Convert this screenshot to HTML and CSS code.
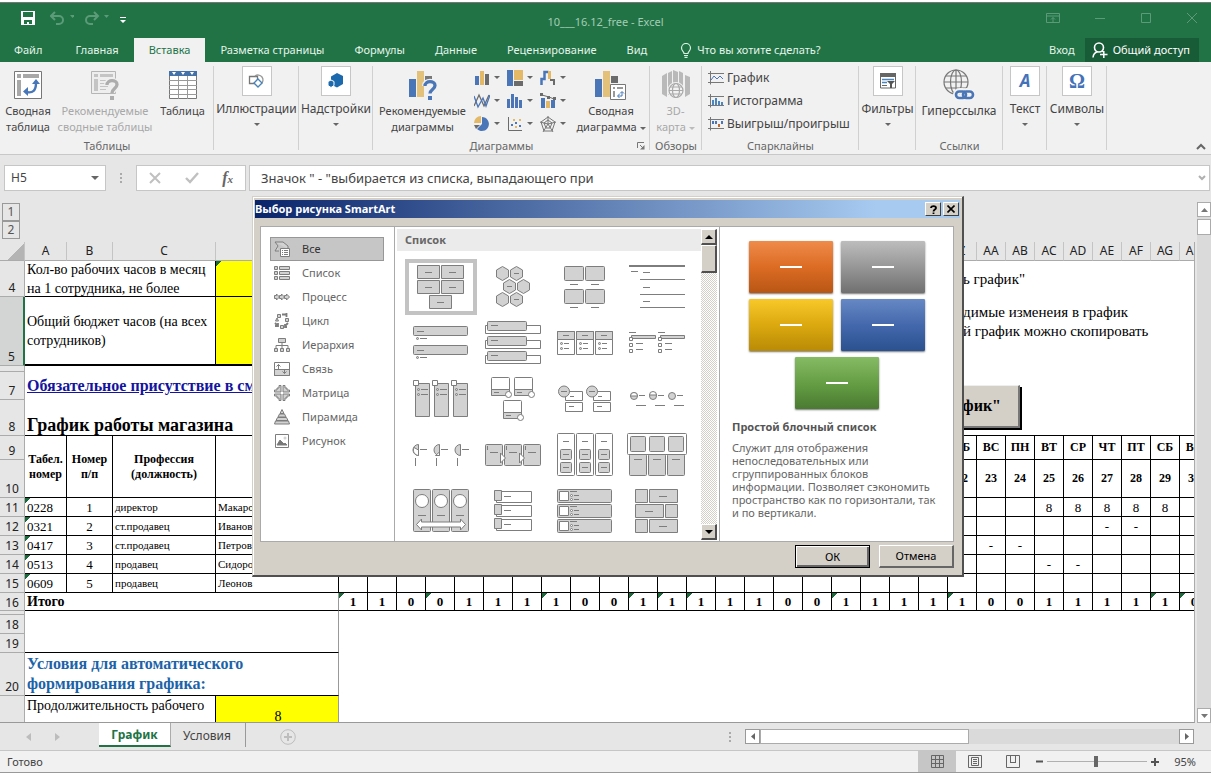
FILE: index.html
```html
<!DOCTYPE html>
<html lang="ru">
<head>
<meta charset="utf-8">
<title>10___16.12_free - Excel</title>
<link rel="stylesheet" href="styles.css">
</head>
<body>
<div class="app">
  <header class="titlebar">
    <div class="quick">
      <button class="icon-btn" aria-label="Сохранить"><svg width="14" height="14" viewBox="0 0 14 14"><path fill="#fff" fill-rule="evenodd" d="M0 0h14v14H0zM2 1v5h10V1zM3 9v4h3v-2h2v2h3V9z"/></svg></button>
      <button class="icon-btn" aria-label="Отменить"><svg width="24" height="14" viewBox="0 0 24 14"><path d="M5 1L1 5l4 4M1 5h8a4 4 0 0 1 0 8H6" fill="none" stroke="#5c9b78" stroke-width="2"/><path d="M20 4h5l-2.500 3z" fill="#5c9b78"/></svg></button>
      <button class="icon-btn" aria-label="Вернуть"><svg width="24" height="14" viewBox="0 0 24 14"><path d="M9 1l4 4-4 4M13 5H5a4 4 0 0 0 0 8h3" fill="none" stroke="#5c9b78" stroke-width="2"/><path d="M19 4h5l-2.500 3z" fill="#5c9b78"/></svg></button>
      <button class="icon-btn" aria-label="Настройка панели"><svg width="6" height="14" viewBox="0 0 6 14"><path d="M0 6h6v1H0zM0 9h6l-3 3z" fill="#fff"/></svg></button>
    </div>
    <div class="doc-title">10___16.12_free - Excel</div>
    <div class="window-buttons">
      <button class="icon-btn" aria-label="Параметры ленты"><svg width="14" height="12" viewBox="0 0 14 12"><path d="M.5 1.500h13v9H.5zM.5 4h13M7 10V5.500M5 7.500l2-2 2 2" fill="none" stroke="#5c9b78"/></svg></button>
      <button class="icon-btn" aria-label="Свернуть"><svg width="12" height="12" viewBox="0 0 12 12"><path d="M1 6.500h10" stroke="#5c9b78"/></svg></button>
      <button class="icon-btn" aria-label="Развернуть"><svg width="12" height="12" viewBox="0 0 12 12"><path d="M1.500 1.500h9v9h-9z" fill="none" stroke="#5c9b78"/></svg></button>
      <button class="icon-btn" aria-label="Закрыть"><svg width="12" height="12" viewBox="0 0 12 12"><path d="M1 1l10 10M11 1L1 11" stroke="#5c9b78"/></svg></button>
    </div>
  </header>

  <nav class="tabs">
    <button class="tab file">Файл</button>
    <button class="tab">Главная</button>
    <button class="tab active">Вставка</button>
    <button class="tab">Разметка страницы</button>
    <button class="tab">Формулы</button>
    <button class="tab">Данные</button>
    <button class="tab">Рецензирование</button>
    <button class="tab">Вид</button>
    <button class="tab tell"><svg width="12" height="15" viewBox="0 0 12 15"><path d="M4 10.500C4 8.500 1.500 8 1.500 5a4.500 4.500 0 0 1 9 0c0 3-2.500 3.500-2.500 5.500zM4 12.500h4M4.500 14.300h3" fill="none" stroke="#d6f2e0" stroke-width="1.200"/></svg>Что вы хотите сделать?</button>
    <span class="spacer"></span>
    <button class="tab signin">Вход</button>
    <button class="share"><svg width="16" height="16" viewBox="0 0 16 16"><circle cx="7" cy="5.500" r="4.500" fill="none" stroke="#fff" stroke-width="1.600"/><path d="M1 15.500c.3-3 2-5 4.500-5.700M10 9l1.500 1M8 12.500h7.500M11.800 9v7" fill="none" stroke="#fff" stroke-width="1.500"/></svg>Общий доступ</button>
  </nav>

  <section class="ribbon">
    <div class="group g-tables">
      <div class="tools">
        <button class="big w-pivot"><svg width="28" height="28" viewBox="0 0 28 28"><path d="M.5.500h27v27H.5z" fill="#fff" stroke="#777"/><path d="M3 3h4v4H3zM9 3h16v4H9zM3 9h4v16H3z" fill="#a8a8a8"/><path d="M12 21c7 1.500 10-1.500 10-9" fill="none" stroke="#4777b8" stroke-width="2.400"/><path d="M18 13l4-5 4 5zM14 16l-5 4.500 5 4.500z" fill="#4777b8"/></svg><span>Сводная<br>таблица</span></button>
        <button class="big w-rec off"><svg width="28" height="30" viewBox="0 0 28 30"><path d="M.5 1.500h24v22H.5z" fill="#eee" stroke="#b5b5b5"/><path d="M3 4h4v3H3zM9 4h13v3H9zM3 9h4v12H3z" fill="#c4c4c4"/><path d="M9 10.500h12M9 13.500h8M9 16.500h8M9 19.500h6" stroke="#c4c4c4"/><path d="M16 15c0-6 10-5.500 10-.5 0 4-5 4-5 8.500" fill="none" stroke="#f0f0f0" stroke-width="6"/><path d="M16 15c0-6 10-5.500 10-.5 0 4-5 4-5 8.500" fill="none" stroke="#adadad" stroke-width="3.300"/><path d="M19 26h4v4h-4z" fill="#adadad"/></svg><span>Рекомендуемые<br>сводные таблицы</span></button>
        <button class="big w-table"><svg width="28" height="28" viewBox="0 0 28 28"><path d="M.5.500h27v27H.5z" fill="#fff" stroke="#777"/><path d="M0 0h28v5H0z" fill="#4472a8"/><path d="M3 1h4L5 4zM12 1h4l-2 3zM21 1h4l-2 3z" fill="#fff"/><path d="M9.500 5v23M18.500 5v23M0 9.500h28M0 14.500h28M0 18.500h28M0 23.500h28" stroke="#999"/></svg><span>Таблица</span></button>
      </div>
      <div class="group-name">Таблицы</div>
    </div>
    <div class="group g-illus"><button class="boxed"><i><svg width="18" height="18" viewBox="0 0 18 18"><path d="M1.500 4.500h8v7h-8z" fill="#fff" stroke="#777" stroke-width="1.300"/><path d="M7 4a5 5 0 1 1 6 8" fill="none" stroke="#999" stroke-width="1.300"/><path d="M10 7l4 4-4 4-4-4z" fill="#fff" stroke="#4782b8" stroke-width="1.300"/></svg></i><span>Иллюстрации</span><b class="caret"></b></button></div>
    <div class="group g-addins"><button class="boxed"><i><svg width="18" height="18" viewBox="0 0 18 18"><path d="M4 4.500L10 1l6 3v8l-6 3.500-6-3z" fill="#1d69ae"/><path d="M1 9.500L4 8l3 1.500v4L4 15.500l-3-2z" fill="#1d69ae" stroke="#fff"/></svg></i><span>Надстройки</span><b class="caret"></b></button></div>
    <div class="group g-charts">
      <div class="tools">
        <button class="big w-recch"><svg width="28" height="30" viewBox="0 0 28 30"><path d="M0 9h7v18H0z" fill="#4a76b8"/><path d="M8 1h7v26H8z" fill="#e3c17b"/><path d="M16 6h7v4h-7z" fill="#777"/><path d="M16 16c0-6 10-5.500 10-.5 0 4-5 4-5 8" fill="none" stroke="#f0f0f0" stroke-width="6"/><path d="M16 16c0-6 10-5.500 10-.5 0 4-5 4-5 8" fill="none" stroke="#4a76b8" stroke-width="3.300"/><path d="M19 26h4v4h-4z" fill="#4a76b8"/></svg><span>Рекомендуемые<br>диаграммы</span></button>
        <div class="chart-grid">
          <button aria-label="Гистограмма"><svg width="16" height="16"><path d="M1 6h4v9H1z" fill="#4a76b8"/><path d="M6 1h4v14H6z" fill="#e3b867"/><path d="M11 4h4v11h-4z" fill="#6b6b6b"/></svg><b class="caret"></b></button>
          <button aria-label="Иерархическая"><svg width="16" height="16"><path d="M0 0h6v16H0z" fill="#4a76b8"/><path d="M7 0h9v10H7z" fill="#e3b867"/><path d="M7 11h9v5H7z" fill="#6b6b6b"/></svg><b class="caret"></b></button>
          <button aria-label="Каскадная"><svg width="16" height="16"><path d="M1.500 15V9h3V2h4" fill="none" stroke="#4a76b8" stroke-width="2.500"/><path d="M8 1h3v8H8z" fill="#e3b867"/><path d="M10 10h4v5" fill="none" stroke="#6b6b6b" stroke-width="2"/></svg><b class="caret"></b></button>
          <button aria-label="График"><svg width="16" height="16"><path d="M0 13L5 2l5 11 5-11" fill="none" stroke="#6b6b6b" stroke-width="1.300"/><path d="M0 3l4 11 5-9 3 8 4-11" fill="none" stroke="#4a76b8" stroke-width="1.300"/></svg><b class="caret"></b></button>
          <button aria-label="Статистическая"><svg width="16" height="16"><path d="M0 6h3v9H0zM4 1h3v14H4zM8 4h3v11H8zM12 7h3v8h-3z" fill="#4a76b8"/></svg><b class="caret"></b></button>
          <button aria-label="Комбинированная"><svg width="16" height="16"><path d="M1 5h4v10H1z" fill="#4a76b8"/><path d="M6 8h4v7H6z" fill="#e3b867"/><path d="M11 7h4v8h-4z" fill="#4a76b8"/><path d="M2 2l7 2 5 2" fill="none" stroke="#6b6b6b"/><path d="M0 0h3v3H0zM7 3h3v3H7zM13 4h3v3h-3z" fill="#6b6b6b"/></svg><b class="caret"></b></button>
          <button aria-label="Круговая"><svg width="16" height="16"><path d="M8 1a7 7 0 1 1-5 12l5-5z" fill="#4a76b8"/><path d="M7 0v7H0a7 7 0 0 1 7-7z" fill="#e3b867"/><path d="M0 9h6l-4 4z" fill="#6b6b6b"/></svg><b class="caret"></b></button>
          <button aria-label="Точечная"><svg width="16" height="16"><path d="M1.500 1v13.500H15" fill="none" stroke="#6b6b6b"/><path d="M4 8h2v2H4zM8 6h2v2H8zM12 9h2v2h-2z" fill="#4a76b8"/><path d="M6 3h2v2H6zM12 3h2v2h-2zM8 10h2v2H8z" fill="#e3b867"/></svg><b class="caret"></b></button>
          <button aria-label="Лепестковая"><svg width="16" height="16"><path d="M8 1l7 5-3 9H4L1 6zM8 4l4 3-2 5H6L4 7zM8 0v8M16 6L8 8l5 8M8 8L3 16M8 8L0 6" fill="none" stroke="#777"/></svg><b class="caret"></b></button>
        </div>
        <button class="big w-pvch"><svg width="32" height="30" viewBox="0 0 32 30"><path d="M0 9h7v18H0z" fill="#4a76b8"/><path d="M8 1h7v26H8z" fill="#e3c17b"/><path d="M16 6h7v7h-7z" fill="#6b6b6b"/><path d="M15.500 14.500h15v15h-15z" fill="#fff" stroke="#777"/><path d="M18 17h2v2h-2zM22 17h6v2h-6zM18 21h2v6h-2z" fill="#999"/><path d="M23 26h4v-4M24.500 24l-2 2 2 2M25 23.500l2-2 2 2" fill="none" stroke="#4777b8"/></svg><span>Сводная<br>диаграмма <b class="caret"></b></span></button>
      </div>
      <div class="group-name">Диаграммы</div>
      <button class="launcher" aria-label="Параметры диаграмм"><svg width="8" height="8" viewBox="0 0 8 8"><path d="M.5 6V.500H7M3 3l3 3" fill="none" stroke="#777"/><path d="M7.500 3v4.500H3z" fill="#777"/></svg></button>
    </div>
    <div class="group g-map">
      <div class="tools">
        <button class="big off w-map"><svg width="30" height="30" viewBox="0 0 30 30"><path d="M1 6l5-3v24l-5-3zM7 3l4-2v24H7zM12 0l5 2v20h-5zM18 1l4 2v22h-4zM24 5l5 2v17l-5 3z" fill="#b9b9b9"/><circle cx="15" cy="20.500" r="7.500" fill="#f2f2f2" stroke="#f2f2f2" stroke-width="2"/><g fill="none" stroke="#a9a9a9" stroke-width="1.200"><circle cx="15" cy="20.500" r="7"/><ellipse cx="15" cy="20.500" rx="3.500" ry="7"/><path d="M8 20.500h14M9 17h12M9 24h12"/></g></svg><span>3D-<br>карта <b class="caret"></b></span></button>
      </div>
      <div class="group-name">Обзоры</div>
    </div>
    <div class="group g-spark">
      <div class="spark-list">
        <button><svg width="16" height="14"><path d="M2.500 0v13.500M0 2.500h16M0 11.500h16" stroke="#777" fill="none"/><path d="M3 9l3-4 3 3 3-3 3 3" fill="none" stroke="#4a76b8"/></svg>График</button>
        <button><svg width="16" height="14"><path d="M2.500 0v13.500M0 2.500h16M0 11.500h16" stroke="#777" fill="none"/><path d="M4 6h2v5H4zM7 4h2v7H7zM10 7h2v4h-2zM13 8h2v3h-2z" fill="#4a86c0"/></svg>Гистограмма</button>
        <button><svg width="16" height="14"><path d="M2.500 0v13.500M0 2.500h16M0 11.500h16" stroke="#777" fill="none"/><path d="M4 4h2v3H4zM7 4h2v3H7zM13 4h2v3h-2z" fill="#4a76b8"/><path d="M10 7h2v3h-2z" fill="#c0692c"/></svg>Выигрыш/проигрыш</button>
      </div>
      <div class="group-name">Спарклайны</div>
    </div>
    <div class="group g-filters"><button class="boxed"><i><svg width="16" height="16" viewBox="0 0 16 16"><path d="M.5 1h15v14H.5z" fill="#fff" stroke="#666"/><path d="M0 0h16v4H0z" fill="#666"/><path d="M2 6.500h12M2 9.500h5" stroke="#4a86c0" stroke-width="1.500"/><path d="M2 12.500h5" stroke="#666"/><path d="M7 8h8l-3 3v4h-2v-4z" fill="#555"/></svg></i><span>Фильтры</span><b class="caret"></b></button></div>
    <div class="group g-links">
      <div class="tools">
        <button class="big w-link"><svg width="32" height="32" viewBox="0 0 32 32"><g fill="none" stroke="#777" stroke-width="1.200"><circle cx="13" cy="13" r="12"/><ellipse cx="13" cy="13" rx="5.500" ry="12"/><path d="M13 1v24M1 13h24M3 7h20M3 19h20"/></g><g fill="none" stroke="#f2f2f2" stroke-width="6"><rect x="13" y="22" width="10" height="7" rx="3.500"/><rect x="20" y="22" width="10" height="7" rx="3.500"/></g><g fill="none" stroke="#4a76b8" stroke-width="2.600"><rect x="13" y="22.500" width="10" height="6.500" rx="3.200"/><rect x="20" y="22.500" width="10" height="6.500" rx="3.200"/></g></svg><span>Гиперссылка</span></button>
      </div>
      <div class="group-name">Ссылки</div>
    </div>
    <div class="group g-text"><button class="boxed"><i class="letter slanted">A</i><span>Текст</span><b class="caret"></b></button></div>
    <div class="group g-symbols"><button class="boxed"><i class="letter omega">Ω</i><span>Символы</span><b class="caret"></b></button></div>
    <span class="spacer"></span>
    <button class="collapse" aria-label="Свернуть ленту"><svg width="10" height="7" viewBox="0 0 10 7"><path d="M1 6l4-4 4 4" fill="none" stroke="#666" stroke-width="2"/></svg></button>
  </section>

  <section class="formula-row">
    <label class="name-box"><input class="name-input" aria-label="Поле имени" value="H5"><b class="caret large"></b></label>
    <span class="grip"></span>
    <div class="fx-box">
      <button aria-label="Отмена ввода"><svg width="12" height="12"><path d="M1 1l10 10M11 1L1 11" stroke="#c0c0c0" stroke-width="2"/></svg></button>
      <button aria-label="Ввод"><svg width="14" height="12"><path d="M1 6l4 4 8-9" fill="none" stroke="#c0c0c0" stroke-width="2.400"/></svg></button>
      <button class="fx" aria-label="Вставить функцию">f<sub>x</sub></button>
    </div>
    <label class="formula-box"><input aria-label="Строка формул" value='Значок " - "выбирается из списка, выпадающего при'><svg width="8" height="6" viewBox="0 0 8 6"><path d="M1 1l3 3 3-3" fill="none" stroke="#b0b0b0" stroke-width="2"/></svg></label>
  </section>

  <main class="workspace">
    <div class="sheet-col">
      <div class="levels"><button>1</button><button>2</button></div>
      <div class="sheet">
        <table class="grid">
          <colgroup id="cols"><col class="c-head"><col class="c-a"><col class="c-b"><col class="c-c"><col class="c-d"></colgroup>
          <thead><tr id="letters"><th class="corner"></th><th>A</th><th>B</th><th>C</th><th></th></tr></thead>
          <tbody>
            <tr class="r4"><th>4</th><td colspan="3" class="line"><div class="two-lines">Кол-во рабочих часов в месяц<br>на 1 сотрудника, не более</div></td><td class="yellow flag line"></td><td colspan="30" class="note">ь график"</td></tr>
            <tr class="r5"><th class="current">5</th><td colspan="3" class="line thick">Общий бюджет часов (на всех<br>сотрудников)</td><td class="yellow line thick"></td><td colspan="30" class="note top">димые изменеия в график<br>й график можно скопировать</td></tr>
            <tr class="r6"><th></th><td colspan="34"></td></tr>
            <tr class="r7"><th>7</th><td colspan="34"><a href="#shift">Обязательное присутствие в см</a></td></tr>
            <tr class="r8"><th>8</th><td colspan="34" class="heading under">График работы магазина</td></tr>
            <tr class="r9 days" id="weekdays"><th>9</th><td rowspan="2">Табел.<br>номер</td><td rowspan="2">Номер<br>п/п</td><td rowspan="2">Профессия<br>(должность)</td><td rowspan="2"></td></tr>
            <tr class="r10 days" id="dates"><th>10</th></tr>
          </tbody>
          <tbody id="staff"></tbody>
          <tbody>
            <tr class="r16" id="totals"><th>16</th><td colspan="4" class="edge under">Итого</td></tr>
            <tr class="r17"><th></th><td colspan="4" class="edge"></td></tr>
            <tr class="r18"><th>18</th><td colspan="4" class="edge"></td></tr>
            <tr class="r18"><th>19</th><td colspan="4" class="edge under"></td></tr>
            <tr class="r20"><th>20</th><td colspan="4" class="edge under blue">Условия для автоматического<br>формирования графика:</td></tr>
            <tr class="r21"><th></th><td colspan="3" class="line">Продолжительность рабочего</td><td class="yellow edge eight">8</td></tr>
          </tbody>
        </table>
        <button class="macro">фик"</button>
      </div>
    </div>
    <div class="vscroll">
      <button aria-label="Вверх"><svg width="7" height="4"><path d="M0 4h7L3.500 0z" fill="#777"/></svg></button>
      <span class="thumb-v"></span>
      <span class="spacer"></span>
      <button aria-label="Вниз"><svg width="7" height="4"><path d="M0 0h7L3.500 4z" fill="#777"/></svg></button>
    </div>
  </main>

  <section class="sheet-tabs">
    <div class="tab-nav">
      <button aria-label="Назад"><svg width="5" height="8"><path d="M5 0v8L0 4z" fill="#bcbcbc"/></svg></button>
      <button aria-label="Вперёд"><svg width="5" height="8"><path d="M0 0v8l5-4z" fill="#bcbcbc"/></svg></button>
    </div>
    <button class="sheet-tab current">График</button>
    <button class="sheet-tab">Условия</button>
    <button class="add" aria-label="Новый лист"><svg width="16" height="16" viewBox="0 0 16 16"><circle cx="8" cy="8" r="7.300" fill="none" stroke="#bdbdbd"/><path d="M8 4v8M4 8h8" stroke="#bdbdbd" stroke-width="2"/></svg></button>
    <span class="spacer"></span>
    <span class="grip"></span>
    <div class="hscroll">
      <button aria-label="Влево"><svg width="4" height="7"><path d="M4 0v7L0 3.500z" fill="#666"/></svg></button>
      <span class="thumb-h"></span>
      <span class="spacer"></span>
      <button aria-label="Вправо"><svg width="4" height="7"><path d="M0 0v7l4-3.500z" fill="#666"/></svg></button>
    </div>
  </section>

  <footer class="status">
    <span>Готово</span>
    <span class="spacer"></span>
    <button class="view on" aria-label="Обычный"><svg width="13" height="13" viewBox="0 0 13 13"><path d="M.5.500h12v12H.5zM4.500 0v13M8.500 0v13M0 4.500h13M0 8.500h13" fill="none" stroke="#666"/></svg></button>
    <button class="view" aria-label="Разметка страницы"><svg width="14" height="13" viewBox="0 0 14 13"><path d="M.5.500h13v12H.5zM3.500 2.500h7v8h-7zM5 4.500h4M5 6.500h4M5 8.500h4" fill="none" stroke="#666"/></svg></button>
    <button class="view" aria-label="Страничный режим"><svg width="14" height="13" viewBox="0 0 14 13"><path d="M.5.500h13v12H.5zM4.500 0v7.500M9.500 0v7.500M4 7.500h6" fill="none" stroke="#666"/></svg></button>
    <button class="zoom-btn" aria-label="Мельче"><svg width="7" height="7"><path d="M0 3.500h7" stroke="#555" stroke-width="2"/></svg></button>
    <input class="zoom" type="range" min="10" max="180" value="93" aria-label="Масштаб">
    <button class="zoom-btn" aria-label="Крупнее"><svg width="8" height="8"><path d="M0 4h8M4 0v8" stroke="#555" stroke-width="2"/></svg></button>
    <span class="percent">95%</span>
  </footer>
</div>

<div class="dialog" role="dialog" aria-labelledby="dlg-title">
  <div class="dlg-title"><h2 id="dlg-title">Выбор рисунка SmartArt</h2>
    <button class="sys" aria-label="Справка"><svg width="9" height="9" viewBox="0 0 9 9"><path d="M2 3C2 .500 7 .500 7 3c0 1.500-2.500 1.500-2.500 3.500M4.500 7.500V9" fill="none" stroke="#000" stroke-width="1.800"/></svg></button>
    <button class="sys" aria-label="Закрыть"><svg width="8" height="8" viewBox="0 0 8 8"><path d="M.5.500l7 7M7.500.500l-7 7" stroke="#000" stroke-width="1.600"/></svg></button>
  </div>
  <div class="dlg-body">
    <div class="cats">
      <button class="cat on"><svg width="16" height="16"><path d="M1 1h8l5 4v3M1 1l3 4-3 5h4" /><path d="M6.500 7.500h9v8h-9z" class="w"/><path d="M8 9.500h1M10 9.500h4M8 11.500h1M10 11.500h4M8 13.500h1M10 13.500h4"/></svg>Все</button>
      <button class="cat"><svg width="16" height="16"><path d="M.5 1.500h3v3h-3zM5.500 1.500h10v3h-10zM.5 6.500h3v3h-3zM5.500 6.500h10v3h-10zM.5 11.500h3v3h-3zM5.500 11.500h10v3h-10z"/></svg>Список</button>
      <button class="cat"><svg width="16" height="16"><path d="M.5 6.500h2v-1.500l3 3-3 3V9.500h-2zM5.500 6.500h2v-1.500l3 3-3 3V9.500h-2zM10.500 6.500h2v-1.500l3 3-3 3V9.500h-2z"/></svg>Процесс</button>
      <button class="cat"><svg width="16" height="16"><path d="M3.500 1.500h3v3h-3zM11.500 5.500h3v3h-3zM6.500 12.500h3v3h-3zM1.500 8h3l-1.500-3z"/><path d="M8 1.500h4M12.500 0v4M14 10l-3 3M11 11v3h2M1 10l3 3M4 10v3H1" stroke-width="1.800"/></svg>Цикл</button>
      <button class="cat"><svg width="16" height="16"><path d="M4.500 1.500h7v4h-7zM.5 11.500h3v3h-3zM6.500 11.500h3v3h-3zM12.500 11.500h3v3h-3z"/><path d="M8 6v5M2 11V8.500h12V11" fill="none"/></svg>Иерархия</button>
      <button class="cat"><svg width="16" height="16"><path d="M.5 8.500h15v6H.5z"/><path d="M.5 1.500h15v13H.5z" fill="none"/><path d="M4.500 8V3.500M2.500 5.500l2-2 2 2M10.500 8v4.500M8.500 10.500l2 2 2-2" fill="none"/></svg>Связь</button>
      <button class="cat"><svg width="16" height="16"><path d="M7 .500v6.500H.5V5H3V3h2V.500zM9 .500v6.500h6.500V5H13V3h-2V.500zM7 15.500V9H.5v2H3v2h2v2.500zM9 15.500V9h6.500v2H13v2h-2v2.500z"/></svg>Матрица</button>
      <button class="cat"><svg width="16" height="16"><path d="M8 .500L10 4.500H6zM5.500 5h5l1.500 3H4zM3.500 8.500h9l1.500 3H2zM1.500 12h13l1 3H.5z"/></svg>Пирамида</button>
      <button class="cat"><svg width="16" height="16"><path d="M1.500 1.500h13v13h-13z" class="w"/><path d="M3 12l3-5 4 4 1-1 2 2z" fill="#777"/><circle cx="11" cy="5" r="1.500" stroke="none"/></svg>Рисунок</button>
    </div>
    <div class="gallery">
      <div class="gallery-main">
        <h3>Список</h3>
        <div class="thumbs">
          <button class="thumb on" aria-label="Простой блочный список"><svg viewBox="0 0 72 56"><path d="M12.500 6.500h22v13h-22zM36.500 6.500h22v13h-22zM12.500 21.500h22v13h-22zM36.500 21.500h22v13h-22zM24.500 36.500h22v13h-22z"/><path d="M20 13.500h7M44 13.500h7M20 28.500h7M44 28.500h7M32 43.500h7"/></svg></button>
          <button class="thumb" aria-label="Чередующиеся шестиугольники"><svg viewBox="0 0 72 56"><defs><path id="hex" d="M0-7l6 3.500v7L0 7l-6-3.500v-7z"/></defs><use href="#hex" x="25.500" y="14.500"/><use href="#hex" x="39.500" y="14.500"/><use href="#hex" x="32.500" y="27.500"/><use href="#hex" x="46.500" y="27.500"/><use href="#hex" x="25.500" y="40.500"/><use href="#hex" x="39.500" y="40.500"/><path d="M37 14.500h5M30 27.500h5M37 40.500h5"/></svg></button>
          <button class="thumb" aria-label="Список названий рисунков"><svg viewBox="0 0 72 56"><rect x="15.500" y="7.500" width="19" height="14" rx="1"/><rect x="36.500" y="7.500" width="19" height="14" rx="1"/><rect x="15.500" y="30.500" width="19" height="14" rx="1"/><rect x="36.500" y="30.500" width="19" height="14" rx="1"/><path d="M21 25.500h8M42 25.500h8M21 48.500h8M42 48.500h8"/></svg></button>
          <button class="thumb" aria-label="Линейный список"><svg viewBox="0 0 72 56"><path d="M8 7h56" stroke-width="2"/><path d="M10 12.500h7M22 13.500h7M19 20.500h45M22 28.500h7M19 35.500h45M22 42.500h7M19 48.500h45"/></svg></button>

          <button class="thumb" aria-label="Вертикальный маркированный"><svg viewBox="0 0 72 56"><rect x="8.500" y="11.500" width="54" height="9" rx="1"/><rect x="8.500" y="30.500" width="54" height="9" rx="1"/><path d="M12 16.500h7M15 23.500h7M12 35.500h7M15 42.500h7"/><circle cx="12.500" cy="23.500" r="1"/><circle cx="12.500" cy="42.500" r="1"/></svg></button>
          <button class="thumb" aria-label="Вертикальный блочный"><svg viewBox="0 0 72 56"><defs><g id="bx"><path class="w" d="M8.500 10.500h55v8h-55z"/><rect x="10.500" y="6.500" width="39" height="9" rx="1"/><path d="M14 10.500h7"/></g></defs><use href="#bx"/><use href="#bx" y="15"/><use href="#bx" y="30"/></svg></button>
          <button class="thumb" aria-label="Горизонтальный маркированный"><svg viewBox="0 0 72 56"><defs><g id="cd"><path class="w" d="M8.500 16.500h17v23h-17z"/><path d="M8.500 16.500h17v8h-17zM14 20.500h6M15 28.500h5M15 33.500h5"/><circle cx="12.500" cy="28.500" r="1"/><circle cx="12.500" cy="33.500" r="1"/></g></defs><use href="#cd"/><use href="#cd" x="19"/><use href="#cd" x="38"/></svg></button>
          <button class="thumb" aria-label="Квадратные маркеры"><svg viewBox="0 0 72 56"><defs><g id="sb"><path d="M8 17.500h7M10.500 20.500h24v3h-24zM15 28.500h7M15 34.500h7"/><path class="w" d="M8.500 22.500h3v3h-3zM8.500 28.500h3v3h-3zM8.500 34.500h3v3h-3z"/></g></defs><use href="#sb"/><use href="#sb" x="29"/></svg></button>

          <button class="thumb" aria-label="Список с рисунками"><svg viewBox="0 0 72 56"><defs><g id="pn"><path d="M10.500 12.500h14v33h-14z"/><path class="w" d="M8.500 9.500h5v5h-5z"/><circle cx="13.500" cy="18.500" r="1"/><circle cx="13.500" cy="23.500" r="1"/><path d="M16 18.500h7M16 23.500h7"/></g></defs><use href="#pn"/><use href="#pn" x="19"/><use href="#pn" x="38"/></svg></button>
          <button class="thumb" aria-label="Рисунки с акцентами"><svg viewBox="0 0 72 56"><defs><g id="pa"><rect class="w" x="14.500" y="6.500" width="18" height="18" rx="1"/><path d="M14.500 18.500h18v6h-18zM17 21.500h5"/><circle class="w" cx="31.500" cy="23.500" r="3"/></g></defs><use href="#pa"/><use href="#pa" x="23"/><use href="#pa" x="12" y="23"/></svg></button>
          <button class="thumb" aria-label="Иерархический список"><svg viewBox="0 0 72 56"><defs><g id="cr"><path class="w" d="M16.500 20.500h17v9h-17zM16.500 31.500h17v9h-17z"/><path d="M21 25.500h4M20 35.500h5"/><circle cx="15" cy="20.500" r="5.500"/><path d="M12 20.500h6"/></g></defs><use href="#cr"/><use href="#cr" x="28"/></svg></button>
          <button class="thumb" aria-label="Заполненные круги"><svg viewBox="0 0 72 56"><defs><g id="ci"><path d="M18 24.500h6M15 34.500h10"/><circle cx="13" cy="25" r="3.500"/></g></defs><use href="#ci"/><use href="#ci" x="19"/><use href="#ci" x="38"/><path class="w" d="M9.500 25h7a3.500 3.500 0 0 0-7 0zM28.500 24h7a3.500 3.500 0 0 0-7 0z"/></svg></button>

          <button class="thumb" aria-label="Сектора"><svg viewBox="0 0 72 56"><defs><g id="hc"><path d="M13.500 17.500v11a5.500 5.500 0 0 1 0-11zM15 22.500h7M10.500 31v8"/></g></defs><use href="#hc"/><use href="#hc" x="21"/><use href="#hc" x="42"/><path class="w" d="M13.500 23v5.500a5.500 5.500 0 0 1-4.500-8zM34.500 25v3.500h-4z"/></svg></button>
          <button class="thumb" aria-label="Список процессов"><svg viewBox="0 0 72 56"><defs><g id="pr"><rect x="8.500" y="17.500" width="17" height="21" rx="1"/><path d="M10.500 19v4M13 25.500h8"/></g></defs><use href="#pr"/><use href="#pr" x="19"/><use href="#pr" x="38"/><path class="w" d="M23.500 26l5 5-5 5zM42.500 26l5 5-5 5z"/></svg></button>
          <button class="thumb" aria-label="Сгруппированный список"><svg viewBox="0 0 72 56"><defs><g id="gr"><rect class="w" x="8.500" y="6.500" width="17" height="42" rx="1"/><rect x="11.500" y="22.500" width="11" height="10" rx="1"/><rect x="11.500" y="35.500" width="11" height="10" rx="1"/><path d="M14 14.500h6M14 27.500h6M14 40.500h6"/></g></defs><use href="#gr"/><use href="#gr" x="19"/><use href="#gr" x="38"/></svg></button>
          <button class="thumb" aria-label="Горизонтальный с рисунками"><svg viewBox="0 0 72 56"><defs><g id="hp"><rect x="8.500" y="27.500" width="17" height="21" rx="1"/><path d="M13 32.500h8"/></g><rect id="hq" x="9.500" y="9.500" width="15" height="15" rx="1"/></defs><use href="#hp"/><use href="#hp" x="19"/><use href="#hp" x="38"/><rect class="w" x="6.500" y="6.500" width="59" height="21" rx="1"/><use href="#hq"/><use href="#hq" x="19"/><use href="#hq" x="38"/></svg></button>

          <button class="thumb" aria-label="Непрерывный с рисунками"><svg viewBox="0 0 72 56"><defs><g id="cp"><rect x="8.500" y="6.500" width="17" height="42" rx="1"/><circle class="w" cx="17" cy="18" r="6.500"/><path d="M13 32.500h8"/></g></defs><use href="#cp"/><use href="#cp" x="19"/><use href="#cp" x="38"/><path class="w" d="M11.500 41.500l5-5.500v3h39v-3l5 5.500-5 5.500v-3h-39v3z"/></svg></button>
          <button class="thumb" aria-label="Список с акцентами"><svg viewBox="0 0 72 56"><defs><g id="ac"><path class="w" d="M19.500 8.500h35v11h-35z"/><path d="M17.500 7.500h7v10h-7zM27 13.500h7"/></g></defs><use href="#ac"/><use href="#ac" y="14"/><use href="#ac" y="28"/></svg></button>
          <button class="thumb" aria-label="Вертикальный с рисунками"><svg viewBox="0 0 72 56"><defs><g id="vp"><rect x="8.500" y="6.500" width="54" height="13" rx="1"/><path class="w" d="M10.500 8.500h9v9h-9z"/><path d="M21 8.500h7M25 12.500h5M25 16.500h5"/><circle class="w" cx="22.500" cy="12.500" r="1"/><circle class="w" cx="22.500" cy="16.500" r="1"/></g></defs><use href="#vp"/><use href="#vp" y="15"/><use href="#vp" y="30"/></svg></button>
          <button class="thumb" aria-label="Блоки"><svg viewBox="0 0 72 56"><path d="M14.500 6.500h12v13h-12zM28.500 6.500h28v13h-28zM14.500 21.500h28v13h-28zM44.500 21.500h12v13h-12zM14.500 36.500h12v13h-12zM28.500 36.500h28v13h-28zM38 13.500h8M24 28.500h8M38 43.500h8"/></svg></button>
        </div>
      </div>
      <div class="old-scroll">
        <button aria-label="Вверх"><svg width="8" height="4"><path d="M0 4h8L4 0z"/></svg></button>
        <span class="old-thumb"></span>
        <span class="spacer"></span>
        <button aria-label="Вниз"><svg width="8" height="4"><path d="M0 0h8L4 4z"/></svg></button>
      </div>
    </div>
    <div class="preview">
      <div class="tiles"><span class="tile orange"></span><span class="tile gray"></span><span class="tile gold"></span><span class="tile navy"></span><span class="tile green"></span></div>
      <h3>Простой блочный список</h3>
      <p>Служит для отображения непоследовательных или сгруппированных блоков информации. Позволяет сэкономить пространство как по горизонтали, так и по вертикали.</p>
    </div>
  </div>
  <div class="dlg-actions"><button class="classic default">ОК</button><button class="classic">Отмена</button></div>
</div>
<script src="app.js"></script>
</body>
</html>
```
FILE: styles.css
```css
* { box-sizing: border-box; }
html, body { height: 100%; }
body { margin: 0; background: #fff; overflow: hidden; position: relative; font-family: "Noto Sans", "Open Sans", sans-serif; font-size: 12px; line-height: 16px; color: #444; }
button, input { font: inherit; color: inherit; margin: 0; padding: 0; border: 0; background: none; border-radius: 0; outline: 0; }
svg { display: block; flex: none; }
h2, h3, p { margin: 0; }
.spacer { flex: 1; }
.caret { display: inline-block; width: 0; height: 0; border: 3px solid transparent; border-top-color: #666; border-bottom: 0; vertical-align: middle; }
.caret.large { border-width: 4px 4px 0; }
.app { display: flex; flex-direction: column; height: 100%; padding: 2px 0; }

/* title bar */
.titlebar { height: 36px; flex: none; display: grid; grid-template-columns: 1fr auto 1fr; align-items: center; background: #217346; border-top: 1px solid #777; }
.quick { display: flex; gap: 11px; padding: 0 0 5px 21px; align-items: center; }
.quick .icon-btn:nth-child(2) { margin-left: 4px; }
.icon-btn { display: flex; }
.doc-title { color: #a3cdb3; font-size: 11px; padding-top: 2px; }
.window-buttons { display: flex; justify-content: flex-end; gap: 34px; padding: 0 13px 5px 0; }

/* ribbon tabs */
.tabs { height: 24px; flex: none; display: flex; background: #217346; color: #e4f5ea; font-size: 11px; }
.tab { padding: 0 15px; display: flex; align-items: center; gap: 5px; white-space: nowrap; }
.tab.file { padding: 0 18px 0 14px; }
.tab.active { background: #f1f1f1; color: #217346; }
.tab.tell { padding: 0 18px; }
.tab.signin { padding: 0 10px; }
.share { display: flex; align-items: center; gap: 5px; background: #185c37; color: #fff; padding: 0 9px 0 7px; margin-right: 12px; }

/* ribbon */
.ribbon { height: 93px; flex: none; display: flex; background: #f1f1f1; border-bottom: 1px solid #c8c8c8; position: relative; }
.group { position: relative; display: flex; flex-direction: column; padding: 4px 0 0; flex: none; }
.group::after { content: ""; position: absolute; right: 0; top: 4px; bottom: 4px; width: 1px; background: #d0d0d0; }
.g-tables { width: 214px; }
.g-illus { width: 85px; }
.g-addins { width: 74px; }
.g-charts { width: 277px; }
.g-map { width: 52px; }
.g-spark { width: 157px; }
.g-filters { width: 57px; }
.g-links { width: 87px; }
.g-text { width: 44px; }
.g-symbols { width: 60px; }
.tools { display: flex; flex: 1; }
.group-name { height: 16px; text-align: center; font-size: 11px; color: #666; }
.g-charts .group-name { padding-right: 20px; }
.big, .boxed { display: flex; flex-direction: column; align-items: center; font-size: 12px; white-space: nowrap; }
.big { padding-top: 3px; font-size: 11px; }
.big.w-link { font-size: 12px; }
.big svg { height: 32px; }
.big span { margin-top: 2px; text-align: center; }
.big.off { color: #a8a8a8; }
.big.off .caret { border-top-color: #bbb; }
.w-pivot { width: 56px; }
.w-rec { width: 98px; }
.w-table { width: 57px; }
.w-recch { width: 99px; }
.w-pvch { width: 76px; }
.w-map { width: 51px; }
.w-link { width: 86px; }
.boxed i { width: 30px; height: 30px; border: 1px solid #c6c6c6; background: #fff; display: flex; align-items: center; justify-content: center; margin-bottom: 5px; }
.boxed .caret { margin-top: 6px; }
.letter { color: #4472b8; font-size: 17px; font-weight: bold; }
.slanted { font-style: italic; }
.boxed .omega { font-family: "Liberation Serif", serif; font-style: normal; font-size: 20px; }
.chart-grid { display: grid; grid-template-columns: repeat(3, 33px); grid-auto-rows: 23px; margin-left: 2px; }
.chart-grid button { display: flex; align-items: center; gap: 4px; }
.launcher { position: absolute; right: 5px; bottom: 4px; }
.spark-list { flex: 1; padding-left: 6px; }
.spark-list button { display: flex; align-items: center; height: 23px; gap: 3px; white-space: nowrap; }
.collapse { align-self: flex-end; padding: 0 5px 4px; }

/* formula bar */
.formula-row { flex: none; display: flex; background: #e6e6e6; padding: 10px 1px 4px 4px; height: 40px; }
.name-box, .fx-box, .formula-box { background: #fff; border: 1px solid #c6c6c6; display: flex; align-items: center; height: 26px; }
.name-box { width: 102px; padding: 0 6px; }
.name-input { flex: 1; min-width: 0; }
.grip { width: 30px; align-self: center; height: 10px; background: radial-gradient(circle, #aaa 1px, transparent 1px) center / 4px 4px repeat-y; }
.fx-box { width: 110px; justify-content: space-between; padding: 0 12px; margin-right: 3px; }
.fx { font: italic bold 16px/16px "Liberation Serif", serif; color: #666; }
.fx sub { font-size: 11px; vertical-align: baseline; }
.formula-box { flex: 1; padding: 0 3px 0 11px; }
.formula-box input { flex: 1; font-size: 13px; }

/* worksheet */
.workspace { flex: 1; min-height: 0; display: flex; background: #e6e6e6; }
.sheet-col { flex: 1; min-width: 0; display: flex; flex-direction: column; margin-right: 2px; }
.levels { height: 47px; flex: none; padding: 8px 2px 0; display: flex; flex-direction: column; }
.levels button { width: 18px; height: 18px; border: 1px solid #999; color: #555; }
.sheet { flex: 1; min-height: 0; overflow: hidden; position: relative; background: #fff; border-right: 1px solid #ababab; border-bottom: 1px solid #999; }
.grid { table-layout: fixed; width: 1209px; border-collapse: separate; border-spacing: 0; font-family: "Liberation Serif", "Times New Roman", serif; color: #000; }
.c-head { width: 25px; } .c-a { width: 42px; } .c-b { width: 46px; } .c-c { width: 103px; } .c-d { width: 123px; } .c-day { width: 29px; }
.grid th { background: #e6e6e6; font: 13px/16px "Noto Sans", sans-serif; color: #222; padding: 0; vertical-align: bottom; border-right: 1px solid #ababab; border-bottom: 1px solid #ababab; }
.grid thead th { height: 19px; font-size: 12px; border-right-color: #c4c4c4; vertical-align: middle; }
.grid tbody th { font-size: 12px; }
.grid th.corner { background: linear-gradient(135deg, #e6e6e6 60%, #b4b4b4 60%); }
.grid th.current { background: #d2d5d3; border-right: 2px solid #217346; }
.grid td { padding: 0 0 0 2px; overflow: hidden; white-space: nowrap; font-size: 14px; line-height: 19px; }
.grid td.line { border-right: 1px solid #000; border-bottom: 1px solid #000; }
.grid td.thick { border-bottom-width: 2px; }
.grid td.under { border-bottom: 1px solid #000; }
.grid td.edge { border-right: 1px solid #999; }
.grid td.yellow { background-color: #ff0; }
.grid td.flag { background-image: linear-gradient(135deg, #1a6b3c 4px, transparent 4px); background-repeat: no-repeat; }
.grid td.note { padding-left: 624px; font-size: 15px; }
.grid td.top { vertical-align: top; padding-top: 6px; }
.two-lines { height: 35px; display: flex; align-items: center; }
.grid td.heading { font-size: 18px; font-weight: bold; vertical-align: bottom; }
.grid a { font-weight: bold; font-size: 16px; color: #1414a0; }
.r4 { height: 36px; } .r5 { height: 69px; } .r6 { height: 6px; } .r7 { height: 28px; } .r8 { height: 36px; }
.r9 { height: 24px; } .r10 { height: 38px; } .r11 { height: 19px; } .r16 { height: 18px; } .r17 { height: 4px; } .r18 { height: 19px; } .r20 { height: 43px; } .r21 { height: 40px; }
.r16 th { line-height: 15px; }
.grid .days td, .grid .r11 td, .grid td.total { border-right: 1px solid #000; border-bottom: 1px solid #000; padding: 0; text-align: center; }
.grid .days td { font-size: 12px; line-height: 15px; font-weight: bold; }
.grid .r11 td { font-size: 13px; line-height: 17px; }
.grid .r11 .code, .grid .r11 .job { text-align: left; padding-left: 2px; }
.grid .r11 .job { font-size: 11px; }
.grid .r16 td { font-weight: bold; line-height: 16px; }
.grid td.total { font-size: 13px; }
.grid td.blue { font-weight: bold; font-size: 16px; color: #1b63a8; line-height: 20px; }
.r21 td { vertical-align: top; }
.grid td.eight { vertical-align: middle; text-align: center; }
.macro { position: absolute; left: 880px; top: 143px; width: 140px; height: 43px; background: #d4d0c8; border: 1px solid #eee; border-right: 2px solid #777; border-bottom: 2px solid #777; box-shadow: 2px 2px 0 #000; color: #000; font: bold 16px "Liberation Serif", serif; text-align: right; padding-right: 17px; }
.vscroll { width: 14px; display: flex; flex-direction: column; background: #dadada; margin-top: 7px; }
.vscroll button { height: 15px; background: #fff; border: 1px solid #ababab; display: flex; align-items: center; justify-content: center; }
.thumb-v { height: 16px; margin-top: 2px; background: #fff; border: 1px solid #ababab; }

/* sheet tabs */
.sheet-tabs { height: 28px; flex: none; display: flex; background: #e6e6e6; padding-right: 17px; border-bottom: 1px solid #c6c6c6; }
.tab-nav { width: 99px; display: flex; align-items: center; padding-left: 26px; gap: 24px; }
.tab-nav button { display: flex; }
.sheet-tab { height: 24px; padding: 2px 14px 0 12px; font-size: 12px; }
.sheet-tab.current { background: #fff; color: #217346; font-weight: bold; border-bottom: 2px solid #217346; border-right: 1px solid #ababab; width: 72px; padding: 2px 0 0; }
.sheet-tab:not(.current) { border-right: 1px solid #999; }
.add { padding: 0 34px; }
.hscroll { width: 449px; display: flex; background: #dadada; height: 15px; align-self: center; }
.hscroll button { width: 15px; background: #fff; border: 1px solid #999; display: flex; align-items: center; justify-content: center; }
.thumb-h { width: 209px; background: #fff; border: 1px solid #ababab; }

/* status bar */
.status { height: 22px; flex: none; display: flex; align-items: center; background: #f1f1f1; border-bottom: 1px solid #999; padding: 0 15px 0 7px; font-size: 11px; }
.view { width: 38px; height: 21px; display: flex; align-items: center; justify-content: center; }
.view.on { background: #c6c6c6; }
.zoom-btn { width: 15px; display: flex; justify-content: center; }
.zoom { appearance: none; width: 100px; height: 14px; background: linear-gradient(#b0b0b0, #b0b0b0) center / 100% 1px no-repeat; }
.zoom::-webkit-slider-thumb { appearance: none; width: 4px; height: 11px; background: #666; }
.percent { width: 34px; text-align: right; }

/* SmartArt dialog */
.dialog { position: absolute; left: 252px; top: 196px; width: 712px; background: #d4d0c8; border: 1px solid #d4d0c8; border-right: 2px solid #505050; border-bottom: 2px solid #505050; box-shadow: inset 1px 1px #fff; padding: 3px 2px 7px; }
.dlg-title { height: 18px; display: flex; align-items: center; gap: 2px; background: linear-gradient(90deg, #0a246a, #a6caf0 88%); color: #fff; padding-right: 1px; }
.dlg-title h2 { flex: 1; font-size: 11px; line-height: 18px; }
.sys { width: 16px; height: 14px; background: #d4d0c8; border: 1px solid #fff; border-right-color: #404040; border-bottom-color: #404040; display: flex; align-items: center; justify-content: center; }
.dlg-body { margin: 8px 6px 0 5px; height: 316px; display: grid; grid-template-columns: 133px 326px 1fr; background: #fff; border: 1px solid #aaa; }
.cats { padding: 10px 10px 0 9px; display: flex; flex-direction: column; }
.cat { height: 24px; display: flex; align-items: center; gap: 12px; padding-left: 3px; border: 1px solid transparent; color: #666; font-size: 11px; }
.cat.on { background: #c6c6c6; border-color: #979797; color: #333; }
.cat svg, .thumb svg { stroke: #7d7d7d; fill: #d2d2d2; stroke-width: 1; }
.cat svg .w, .w { fill: #fff; }
.gallery { display: flex; border-left: 1px solid #aaa; border-right: 1px solid #aaa; }
.gallery-main { flex: 1; padding: 2px 0 0 2px; }
.gallery h3 { background: #ebebeb; height: 22px; line-height: 22px; padding-left: 8px; font-size: 11px; color: #666; }
.thumbs { display: grid; grid-template-columns: repeat(4, 72px); grid-auto-rows: 56px; padding: 8px 0 0 8px; }
.thumb { position: relative; }
.thumb.on { box-shadow: inset 0 0 0 4px #c3c3c3; }
.thumb svg { width: 72px; height: 56px; }
.old-scroll { width: 16px; margin: 2px 2px 1px 0; display: flex; flex-direction: column; background: repeating-conic-gradient(#fff 0 25%, #d4d0c8 0 50%) 0 0 / 2px 2px; }
.old-scroll button, .old-thumb { height: 16px; background: #d4d0c8; border: 1px solid #fff; border-right: 2px solid #505050; border-bottom: 2px solid #505050; display: flex; align-items: center; justify-content: center; }
.old-thumb { height: 28px; }
.preview { padding: 14px 12px 0; color: #666; font-size: 11px; line-height: 13px; }
.tiles { display: flex; flex-wrap: wrap; justify-content: center; gap: 6px 8px; margin-bottom: 10px; }
.tile { width: 84px; height: 52px; border-radius: 1px; box-shadow: 0 1px 2px #777; display: flex; align-items: center; justify-content: center; }
.tile::after { content: ""; width: 22px; height: 2px; background: #fff; }
.orange { background: linear-gradient(#ef8b4a, #dc6c24 50%, #b85614); }
.gray { background: linear-gradient(#bdbdbd, #8f8f8f 60%, #707070); }
.gold { background: linear-gradient(#f8c82a, #dba90f 50%, #b98a06); }
.navy { background: linear-gradient(#6688c4, #4468ac 50%, #2b5190); }
.green { background: linear-gradient(#86bb64, #629b42 55%, #4b7a32); }
.preview h3 { font-size: 11px; line-height: 16px; margin-bottom: 6px; color: #555; }
.dlg-actions { display: flex; justify-content: flex-end; gap: 9px; padding: 3px 6px 0; }
.classic { width: 75px; height: 23px; background: #d4d0c8; border: 1px solid #fff; border-right: 2px solid #666; border-bottom: 2px solid #666; color: #000; font-size: 11px; }
.classic.default { border: 1px solid #000; box-shadow: inset 1px 1px #fff, inset -2px -2px #666; }
```
FILE: app.js
```js
const DAYS = 30;
const FIRST_LABELLED = 21;
const weekNames = ['СБ', 'ВС', 'ПН', 'ВТ', 'СР', 'ЧТ', 'ПТ'];
const letters = { 21: 'Z', 22: 'AA', 23: 'AB', 24: 'AC', 25: 'AD', 26: 'AE', 27: 'AF', 28: 'AG', 29: 'AH' };
const totals = '110011110011111001111100111110'.split('');
const flagged = [0, 3, 7, 10, 11, 12, 17, 21, 28, 29];
const staff = [
  ['11', '0228', '1', 'директор', 'Макаров', { 24: '8', 25: '8', 26: '8', 27: '8', 28: '8' }],
  ['12', '0321', '2', 'ст.продавец', 'Иванов', { 26: '-', 27: '-' }],
  ['13', '0417', '3', 'ст.продавец', 'Петров', { 22: '-', 23: '-' }],
  ['14', '0513', '4', 'продавец', 'Сидоров', { 24: '-', 25: '-' }],
  ['15', '0609', '5', 'продавец', 'Леонов', {}]
];

function add(parent, tag, text, cls) {
  const el = document.createElement(tag);
  if (text) el.textContent = text;
  if (cls) el.className = cls;
  parent.appendChild(el);
  return el;
}
const byId = id => document.getElementById(id);

for (let i = 0; i < DAYS; i++) {
  const labelled = i >= FIRST_LABELLED;
  add(byId('cols'), 'col', '', 'c-day');
  add(byId('letters'), 'th', letters[i] || '');
  add(byId('weekdays'), 'td', labelled ? weekNames[i % 7] : '');
  add(byId('dates'), 'td', labelled ? String(i + 1) : '');
  add(byId('totals'), 'td', totals[i], flagged.includes(i) ? 'total flag' : 'total');
}
for (const [row, code, num, job, name, marks] of staff) {
  const tr = add(byId('staff'), 'tr', '', 'r11');
  add(tr, 'th', row);
  add(tr, 'td', code, 'code flag');
  add(tr, 'td', num);
  add(tr, 'td', job, 'job');
  add(tr, 'td', name, 'job');
  for (let i = 0; i < DAYS; i++) add(tr, 'td', marks[i] || '');
}
```
